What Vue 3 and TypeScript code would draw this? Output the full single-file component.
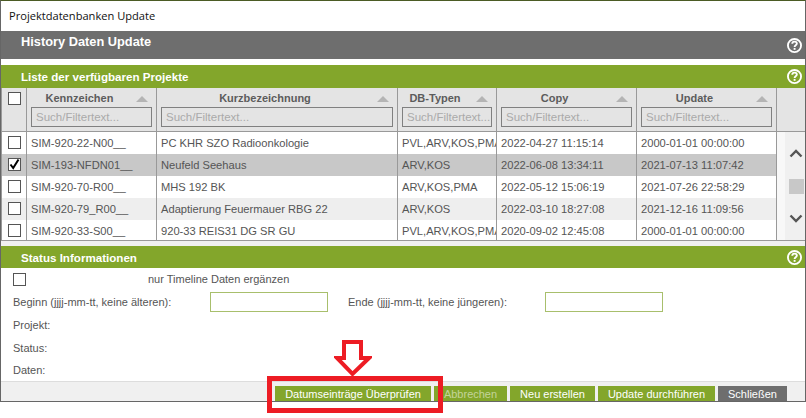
<script setup lang="ts">
interface Row { id: string; name: string; types: string; copy: string; update: string; checked?: boolean; tone: string }
const columns = ['Kennzeichen', 'Kurzbezeichnung', 'DB-Typen', 'Copy', 'Update']
const rows: Row[] = [
  { id: 'SIM-920-22-N00__', name: 'PC KHR SZO Radioonkologie', types: 'PVL,ARV,KOS,PMA', copy: '2022-04-27 11:15:14', update: '2000-01-01 00:00:00', tone: 'white' },
  { id: 'SIM-193-NFDN01__', name: 'Neufeld Seehaus', types: 'ARV,KOS', copy: '2022-06-08 13:34:11', update: '2021-07-13 11:07:42', checked: true, tone: 'selected' },
  { id: 'SIM-920-70-R00__', name: 'MHS 192 BK', types: 'ARV,KOS,PMA', copy: '2022-05-12 15:06:19', update: '2021-07-26 22:58:29', tone: 'white' },
  { id: 'SIM-920-79_R00__', name: 'Adaptierung Feuermauer RBG 22', types: 'ARV,KOS', copy: '2022-03-10 18:27:08', update: '2021-12-16 11:09:56', tone: 'alt' },
  { id: 'SIM-920-33-S00__', name: '920-33 REIS31 DG SR GU', types: 'PVL,ARV,KOS,PMA', copy: '2020-09-02 12:45:08', update: '2000-01-01 00:00:00', tone: 'white' },
]
</script>

<template>
  <div class="page">
    <div class="dialog">
      <div class="title">Projektdatenbanken Update</div>

      <div class="bar bar-gray">
        <span class="bar-label bar-label-high">History Daten Update</span>
        <svg class="help" viewBox="0 0 16 16" width="15" height="15"><circle cx="8" cy="8" r="7" fill="none" stroke="#fff" stroke-width="2" /><path d="M5.6 6.2c0-1.5 1.1-2.4 2.5-2.4s2.4.9 2.4 2.1c0 1.9-2.4 1.9-2.4 3.700" fill="none" stroke="#fff" stroke-width="2" /><rect x="7.100" y="10.600" width="2" height="2" fill="#fff" /></svg>
      </div>
      <div class="gap-white"></div>

      <div class="bar bar-green bar-list">
        <span class="bar-label">Liste der verfügbaren Projekte</span>
        <svg class="help" viewBox="0 0 16 16" width="15" height="15"><circle cx="8" cy="8" r="7" fill="none" stroke="#fff" stroke-width="2" /><path d="M5.6 6.2c0-1.5 1.1-2.4 2.5-2.4s2.4.9 2.4 2.1c0 1.9-2.4 1.9-2.4 3.700" fill="none" stroke="#fff" stroke-width="2" /><rect x="7.100" y="10.600" width="2" height="2" fill="#fff" /></svg>
      </div>

      <div class="table">
        <div class="grid head">
          <div class="cell check-cell"><span class="box"></span></div>
          <div v-for="c in columns" :key="c" class="cell head-cell">
            <div class="head-top">
              <span class="head-name">{{ c }}</span>
              <span class="sort"></span>
            </div>
            <div class="filter">Such/Filtertext...</div>
          </div>
          <div class="cell head-end"></div>
        </div>

        <div class="body-wrap">
          <div class="body">
            <div v-for="r in rows" :key="r.id" class="grid row" :class="r.tone">
              <div class="cell check-cell">
                <span class="box">
                  <svg v-if="r.checked" viewBox="0 0 13 13" width="13" height="13"><path d="M2.5 6.5 5.2 10 10.5 1.5" fill="none" stroke="#000" stroke-width="2" /></svg>
                </span>
              </div>
              <div class="cell txt">{{ r.id }}</div>
              <div class="cell txt">{{ r.name }}</div>
              <div class="cell txt">{{ r.types }}</div>
              <div class="cell txt">{{ r.copy }}</div>
              <div class="cell txt">{{ r.update }}</div>
            </div>
          </div>
          <div class="scroll">
            <svg class="chev" viewBox="0 0 14 9" width="14" height="9"><path d="M1.500 7.500 7 2l5.500 5.500" fill="none" stroke="#555" stroke-width="2.400" /></svg>
            <div class="thumb"></div>
            <svg class="chev chev-down" viewBox="0 0 14 9" width="14" height="9"><path d="M1.500 1.500 7 7l5.500-5.500" fill="none" stroke="#555" stroke-width="2.400" /></svg>
          </div>
        </div>
      </div>

      <div class="gap-light"></div>

      <div class="bar bar-green bar-status">
        <span class="bar-label">Status Informationen</span>
        <svg class="help" viewBox="0 0 16 16" width="15" height="15"><circle cx="8" cy="8" r="7" fill="none" stroke="#fff" stroke-width="2" /><path d="M5.6 6.2c0-1.5 1.1-2.4 2.5-2.4s2.4.9 2.4 2.1c0 1.9-2.4 1.9-2.4 3.700" fill="none" stroke="#fff" stroke-width="2" /><rect x="7.100" y="10.600" width="2" height="2" fill="#fff" /></svg>
      </div>

      <div class="status">
        <div class="timeline">
          <span class="box"></span>
          <span class="timeline-label">nur Timeline Daten ergänzen</span>
        </div>
        <div class="range">
          <span class="range-label">Beginn (jjjj-mm-tt, keine älteren):</span>
          <span class="date"></span>
          <span class="range-label range-end">Ende (jjjj-mm-tt, keine jüngeren):</span>
          <span class="date"></span>
        </div>
        <div class="info info-first">Projekt:</div>
        <div class="info">Status:</div>
        <div class="info">Daten:</div>
      </div>

      <div class="footer">
        <span class="btn b1">Datumseinträge Überprüfen</span>
        <span class="btn b2 disabled">Abbrechen</span>
        <span class="btn b3">Neu erstellen</span>
        <span class="btn b4">Update durchführen</span>
        <span class="btn b5 dark">Schließen</span>
      </div>
    </div>

    <svg class="arrow" viewBox="0 0 38 37" width="38" height="37">
      <path d="M10 2h17v16h8L18.500 34 3 18h7z" fill="#fff" stroke="#ed1c24" stroke-width="4" />
    </svg>
    <div class="redbox"></div>
  </div>
</template>

<style scoped>
.page {
  position: relative;
  width: 806px;
  height: 418px;
  background: #fff;
  overflow: hidden;
  font-family: "Liberation Sans", Arial, sans-serif;
  font-size: 11px;
  color: #555;
}
.dialog {
  box-sizing: border-box;
  width: 806px;
  height: 402px;
  border-top: 1px solid #4b5b24;
  border-left: 1px solid #666;
  border-right: 1px solid #666;
  border-bottom: 1px solid #666;
  display: flex;
  flex-direction: column;
  background: #fff;
}
.title {
  height: 30px;
  line-height: 30px;
  padding-left: 8px;
  font-family: "Open Sans", "Noto Sans", sans-serif;
  font-size: 11.100px;
  color: #111;
  flex: none;
}
.bar {
  display: flex;
  justify-content: space-between;
  align-items: center;
  padding: 0 3px 0 20px;
  color: #fff;
  font-weight: bold;
  font-size: 11.600px;
  flex: none;
}
.bar-gray { height: 28px; background: #6e6e6e; }
.bar-green { background: #83a62b; }
.bar-list { height: 23px; }
.bar-status { height: 22px; }
.bar-label-high { align-self: flex-start; line-height: 22px; font-size: 12.800px; }
.help { flex: none; }
.gap-white { height: 6px; flex: none; }
.gap-light { height: 5px; flex: none; background: #f0f0f0; }

.table {
  flex: none;
  background: #fff;
  border-left: 1px solid #999;
  border-bottom: 1px solid #999;
}
.grid {
  display: grid;
  grid-template-columns: 25px 130px 241px 99px 140px 140px;
}
.head {
  grid-template-columns: 25px 130px 241px 99px 140px 140px 1fr;
  height: 44px;
  background: #e4e4e4;
  border-bottom: 1px solid #999;
  box-sizing: border-box;
}
.cell {
  box-sizing: border-box;
  border-right: 1px solid #999;
  min-width: 0;
  overflow: hidden;
}
.head-end { border-right: none; }
.check-cell { padding: 4px 0 0 6px; }
.box {
  display: block;
  box-sizing: border-box;
  width: 13px;
  height: 13px;
  background: #fff;
  border: 1px solid #555;
  flex: none;
}
.box svg { display: block; margin: -1px; }
.head-cell { padding: 0 4px; color: #5c5c5c; }
.head-top {
  display: flex;
  align-items: center;
  height: 19px;
}
.head-name {
  flex: 1;
  text-align: center;
  font-weight: bold;
  padding-right: 8px;
  font-size: 11px;
}
.sort {
  width: 0;
  height: 0;
  border-left: 6px solid transparent;
  border-right: 6px solid transparent;
  border-bottom: 6px solid #b4b4b4;
  margin-right: 4px;
  margin-top: 2px;
}
.filter {
  box-sizing: border-box;
  height: 20px;
  line-height: 18px;
  border: 1px solid #808080;
  padding-left: 4px;
  color: #aaa;
  font-size: 11.500px;
  white-space: nowrap;
  overflow: hidden;
}
.body-wrap { display: flex; }
.body { width: 775px; flex: none; }
.row { height: 22px; }
.row:last-child { height: 20px; }
.white { background: #fff; }
.selected { background: #c8c8c8; }
.alt { background: #eeeeee; }
.txt {
  line-height: 22px;
  padding-left: 4px;
  white-space: nowrap;
  font-size: 11.150px;
}
.scroll {
  flex: 1;
  background: linear-gradient(to right, #f8f8f8 0 8px, #f0f0f0 8px);
  display: flex;
  flex-direction: column;
  align-items: center;
  padding: 17px 0 0 10px;
  box-sizing: border-box;
}
.chev { flex: none; }
.thumb {
  width: 15px;
  height: 15px;
  background: #c8c8c8;
  margin-top: 21px;
  flex: none;
}
.chev-down { margin-top: 20px; }

.status {
  flex: 1;
  padding: 4px 0 0 12px;
  min-height: 0;
  background: #fff;
}
.timeline { display: flex; align-items: center; height: 14px; }
.timeline-label { margin-left: 122px; }
.range {
  display: flex;
  align-items: center;
  height: 20px;
  margin-top: 6px;
}
.range-label { width: 197px; flex: none; }
.range-end { margin-left: 20px; }
.date {
  box-sizing: border-box;
  width: 118px;
  height: 20px;
  border: 1px solid #a8bf6c;
  background: #fff;
  flex: none;
}
.info { height: 22.500px; line-height: 22.500px; }
.info-first { margin-top: 2px; }

.footer {
  flex: none;
  box-sizing: border-box;
  height: 20px;
  background: #f0f0f0;
  border-top: 1px solid #ddd;
  display: flex;
  align-items: flex-end;
  padding-left: 274px;
  gap: 3px;
}
.btn {
  height: 15px;
  line-height: 16px;
  background: #83a62b;
  color: #fff;
  text-align: center;
  flex: none;
  white-space: nowrap;
  overflow: hidden;
}
.b1 { width: 156px; }
.b2 { width: 73px; }
.b3 { width: 85px; }
.b4 { width: 117px; }
.b5 { width: 69px; }
.disabled { color: #c3d49a; }
.dark { background: #6e6e6e; }

.arrow {
  position: absolute;
  left: 334px;
  top: 340px;
}
.redbox {
  position: absolute;
  box-sizing: border-box;
  left: 267px;
  top: 376px;
  width: 176px;
  height: 37px;
  border: 5px solid #ed1c24;
}
</style>
